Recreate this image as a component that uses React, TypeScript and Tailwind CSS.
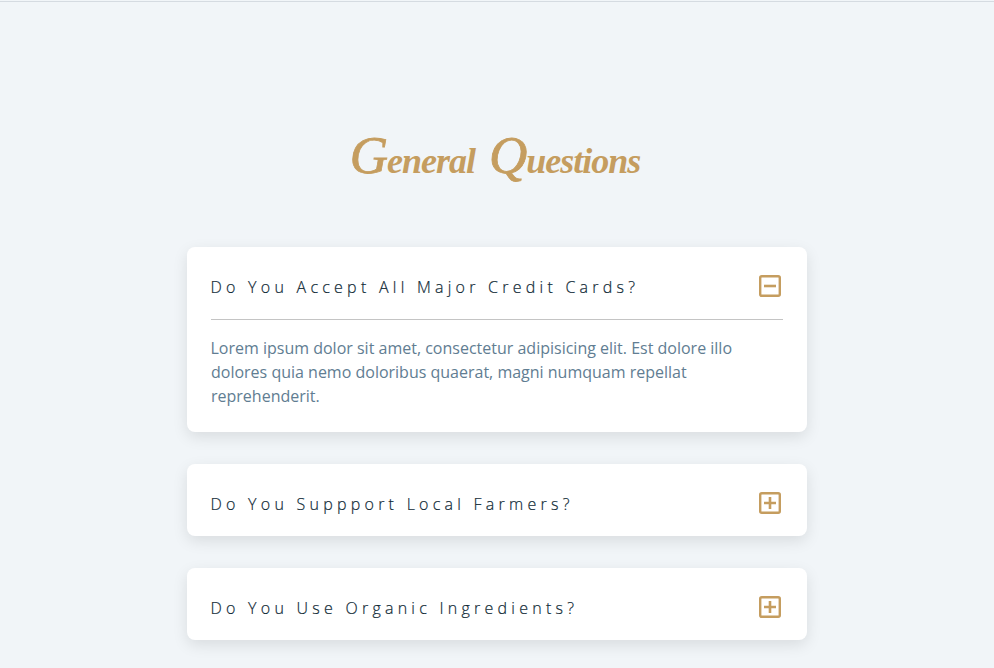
import React, { useState } from "react";

const answer =
  "Lorem ipsum dolor sit amet, consectetur adipisicing elit. Est dolore illo dolores quia nemo doloribus quaerat, magni numquam repellat reprehenderit.";
const questions = [
  "Do You Accept All Major Credit Cards?",
  "Do You Suppport Local Farmers?",
  "Do You Use Organic Ingredients?",
];

function ToggleIcon({ expanded }: { expanded: boolean }) {
  return (
    <svg width="22" height="22" viewBox="0 0 22 22" fill="none" stroke="currentColor">
      <rect x="1.2" y="1.2" width="19.6" height="19.6" rx="1.6" strokeWidth="2.4" />
      <path d={expanded ? "M5 11H17" : "M5 11H17M11 5V17"} strokeWidth="2.6" />
    </svg>
  );
}

export default function App() {
  const [open, setOpen] = useState<number | null>(0);
  return (
    <main className="h-screen overflow-hidden bg-[#f1f5f8] pt-px font-['Open_Sans',sans-serif]">
      <div className="h-px bg-[#d5dbe1]" />
      <section className="mx-auto w-[620px] pt-[128px]">
        <h2 className="flex h-[64px] items-baseline justify-center gap-[14px] pr-1 font-['Liberation_Serif',serif] text-[36px] leading-[50px] font-bold tracking-[-1px] text-[#c59d5f] italic">
          <span><span className="text-[53px] font-normal [-webkit-text-stroke:0.8px_#c59d5f]">G</span>eneral</span>
          <span><span className="text-[53px] font-normal [-webkit-text-stroke:0.8px_#c59d5f]">Q</span>uestions</span>
        </h2>
        <div className="mt-[53px] flex flex-col gap-8">
          {questions.map((question, i) => (
            <article key={question} className="rounded-lg bg-white p-6 shadow-[0_5px_15px_rgba(0,0,0,0.1)]">
              <div className="flex h-6 items-center justify-between">
                <p className="-ml-[0.5px] pt-2 text-base leading-6 font-light tracking-[4.25px] whitespace-nowrap text-[#102a36] [-webkit-text-stroke:0.2px_#102a36]">{question}</p>
                <button
                  aria-label={open === i ? "Collapse" : "Expand"}
                  onClick={() => setOpen(open === i ? null : i)}
                  className="mt-[6px] mr-[2px] text-[#c59d5f]"
                >
                  <ToggleIcon expanded={open === i} />
                </button>
              </div>
              {open === i && (
                <p className="mt-6 border-t border-[#c4c4c4] pt-4 text-base leading-6 text-[#617d92]">
                  <span className="-ml-[0.5px]">{answer}</span>
                </p>
              )}
            </article>
          ))}
        </div>
      </section>
    </main>
  );
}
